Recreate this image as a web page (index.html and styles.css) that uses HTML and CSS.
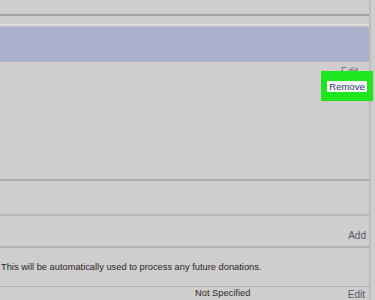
FILE: index.html
```html
<!DOCTYPE html>
<html lang="en">

<head>
    <meta charset="UTF-8">
    <meta name="viewport" content="width=device-width, initial-scale=1.0">
    <title>Payment methods</title>
    <link rel="stylesheet" href="styles.css">
</head>

<body>
    <div class="page">
        <div class="top-rule"></div>
        <div class="selected-row"></div>

        <div class="card-row">
            <span class="link link-edit">Edit</span>
            <div class="highlight">
                <span class="remove">Remove</span>
            </div>
        </div>

        <div class="section-gap"></div>

        <div class="add-row">
            <span class="link">Add</span>
        </div>

        <p class="note">This will be automatically used to process any future donations.</p>

        <div class="detail-row">
            <span class="value">Not Specified</span>
            <span class="link">Edit</span>
        </div>
    </div>
</body>

</html>
```

FILE: styles.css
```css
body {
    margin: 0;
    background-color: #cfcdcd;
    font-family: 'Liberation Sans', Arial, sans-serif;
    overflow: hidden;
}

.page {
    width: 369px;
    height: 300px;
    border-right: 2px solid #bdbbbb;
}

.top-rule {
    height: 14px;
    border-bottom: 2px solid #a3a2a3;
}

.selected-row {
    margin-top: 8px;
    border-top: 1px solid #e4e2e2;
    padding-top: 2px;
    height: 35px;
    background-color: #abb0cd;
    background-clip: content-box;
    border-bottom: 1px solid #d8d0c8;
}

.card-row {
    position: relative;
    height: 116px;
    border-bottom: 2px solid #aeadae;
}

.link {
    font-size: 10px;
    color: #4f566c;
}

.link-edit {
    position: absolute;
    top: 3px;
    right: 11px;
    color: #6a6e7a;
}

.highlight {
    position: absolute;
    top: 8px;
    right: -4px;
    width: 52px;
    height: 30px;
    background-color: #1ee61e;
    display: flex;
    align-items: center;
    justify-content: center;
}

.remove {
    background-color: #f4f4f6;
    color: #2f3f6e;
    font-size: 9.5px;
    line-height: 11px;
    padding: 0 2px;
}

.section-gap {
    height: 33px;
    border-bottom: 2px solid #b8b6b7;
}

.add-row {
    height: 30px;
    display: flex;
    justify-content: flex-end;
    align-items: flex-end;
    padding-right: 3px;
    border-bottom: 2px solid #b5b4b4;
}

.add-row .link {
    margin-bottom: 5px;
}

.note {
    margin: 0;
    padding: 14px 0 0 1px;
    height: 24px;
    font-size: 9.3px;
    color: #262626;
    border-bottom: 1px solid #b0afaf;
}

.detail-row {
    position: relative;
    height: 13px;
    display: flex;
    justify-content: flex-end;
    align-items: flex-end;
    padding-right: 4px;
}

.value {
    position: absolute;
    left: 195px;
    top: 1px;
    font-size: 9.3px;
    color: #2b2b2b;
}
```
